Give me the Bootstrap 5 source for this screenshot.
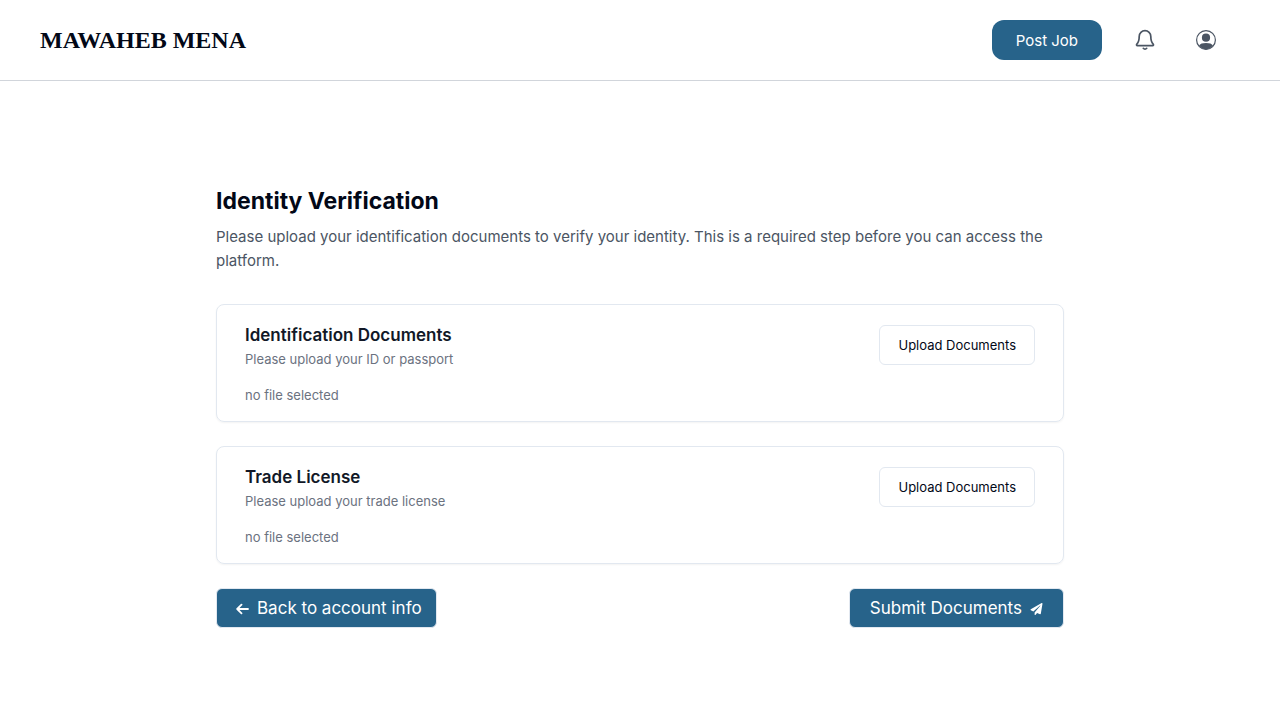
<!DOCTYPE html>
<html lang="en">
<head>
<meta charset="utf-8">
<meta name="viewport" content="width=device-width, initial-scale=1">
<title>Identity Verification</title>
<link href="https://cdn.jsdelivr.net/npm/bootstrap@5.3.0/dist/css/bootstrap.min.css" rel="stylesheet">
<style>
  body { font-family: Inter, "Liberation Sans", sans-serif; font-size: 15px; line-height: 24px; color: #020817; }
  .site-header { height: 81px; border-bottom: 1px solid #d1d5db; padding: 0 64px 0 40px; }
  .brand-name { font-family: "Liberation Serif", serif; font-size: 24px; font-weight: 700; line-height: 32px; color: #020817; }
  .post-btn { background: #27638a; color: #fff; border: 0; border-radius: 12px; height: 40px; padding: 2px 24px 0; font-size: 15px; line-height: 24px; }
  .post-btn:hover, .action-btn:hover { background: #1f5274; color: #fff; }
  .icon-btn { color: #4b5563; line-height: 0; }
  .content-col { max-width: 848px; padding: 104px 0 0; }
  .page-title { font-size: 23px; font-weight: 700; line-height: 32px; }
  .page-intro { color: #4b5563; margin-bottom: 31px; }
  .doc-card { border: 1px solid #e2e8f0; border-radius: 8px; padding: 20px 28px 16px; box-shadow: 0 1px 2px rgba(0,0,0,.05); }
  .doc-title { font-size: 17px; font-weight: 600; line-height: 20px; color: #111827; }
  .doc-text { font-size: 13px; line-height: 20px; color: #6b7280; }
  .upload-btn { border: 1px solid #e2e8f0; border-radius: 6px; height: 40px; padding: 2px 18px 0; font-size: 13px; color: #020817; background: #fff; }
  .action-btn { background: #27638a; color: #fff; border: 1px solid #e2e8f0; border-radius: 6px; height: 40px; padding: 1px 14px 0 19px; font-size: 17px; }
  .submit-btn { padding: 1px 20px 0; }
</style>
</head>
<body>
<header class="site-header d-flex align-items-center justify-content-between">
  <a href="#" class="brand-name text-decoration-none">MAWAHEB MENA</a>
  <nav class="d-flex align-items-center" aria-label="Account">
    <button type="button" class="btn post-btn">Post Job</button>
    <button type="button" class="btn icon-btn border-0 p-0 ms-4" aria-label="Notifications">
      <svg width="38" height="24" viewBox="-7 0 38 24" fill="none" stroke="currentColor" stroke-width="1.7" stroke-linecap="round" stroke-linejoin="round"><path d="M6.2 8.5a5.800 5.800 0 0 1 11.600 0c0 4.200.8 6.100 2.400 7.600.6.600.2 1.500-.6 1.500H4.400c-.8 0-1.200-.9-.6-1.500 1.600-1.500 2.400-3.400 2.400-7.600Z"/><path d="M10.300 20.300c.9 1.100 2.500 1.100 3.400 0"/></svg>
    </button>
    <button type="button" class="btn icon-btn border-0 p-0 ms-4" aria-label="Profile">
      <svg class="ms-2" width="20" height="20" viewBox="0 0 20 20"><circle cx="10" cy="10" r="9.400" fill="none" stroke="currentColor" stroke-width="1.200"/><circle cx="10" cy="7.700" r="4.100" fill="currentColor"/><path d="M3 15.600C4.200 13.700 6.400 13 10 13s5.800.7 7 2.600A9.200 9.200 0 0 1 10 19.400a9.200 9.200 0 0 1-7-3.800Z" fill="currentColor"/></svg>
    </button>
  </nav>
</header>
<main class="container-fluid content-col">
  <h1 class="page-title mb-2">Identity Verification</h1>
  <p class="page-intro">Please upload your identification documents to verify your identity. This is a required step before you can access the platform.</p>

  <section class="doc-card mb-4">
    <div class="d-flex justify-content-between align-items-start">
      <div>
        <h2 class="doc-title mb-1">Identification Documents</h2>
        <p class="doc-text mb-3">Please upload your ID or passport</p>
      </div>
      <button type="button" class="btn upload-btn">Upload Documents</button>
    </div>
    <p class="doc-text mb-0">no file selected</p>
  </section>

  <section class="doc-card mb-4">
    <div class="d-flex justify-content-between align-items-start">
      <div>
        <h2 class="doc-title mb-1">Trade License</h2>
        <p class="doc-text mb-3">Please upload your trade license</p>
      </div>
      <button type="button" class="btn upload-btn">Upload Documents</button>
    </div>
    <p class="doc-text mb-0">no file selected</p>
  </section>

  <div class="d-flex justify-content-between">
    <button type="button" class="btn action-btn d-flex align-items-center gap-2">
      <svg width="13" height="12" viewBox="0 0 13 12" fill="none" stroke="currentColor" stroke-width="1.800" stroke-linecap="round" stroke-linejoin="round"><path d="M12 6H1.500M5.500 1.700 1.200 6l4.300 4.300"/></svg>
      Back to account info
    </button>
    <button type="submit" class="btn action-btn submit-btn d-flex align-items-center gap-2">
      Submit Documents
      <svg width="13" height="12" viewBox="0 0 512 512" fill="currentColor"><path d="M476 3.200 12.500 270.600c-18.100 10.400-15.800 35.600 2.200 43.200L121 358.400l287.300-253.200c5.500-4.900 13.300 2.600 8.600 8.300L176 407v80.500c0 23.600 28.500 32.900 42.500 15.800L282 426l124.600 52.200c14.200 6 30.400-2.900 33-18.200l72-432C515 7.800 493.300-6.800 476 3.200z"/></svg>
    </button>
  </div>
</main>
<script src="https://cdn.jsdelivr.net/npm/bootstrap@5.3.0/dist/js/bootstrap.bundle.min.js"></script>
</body>
</html>
